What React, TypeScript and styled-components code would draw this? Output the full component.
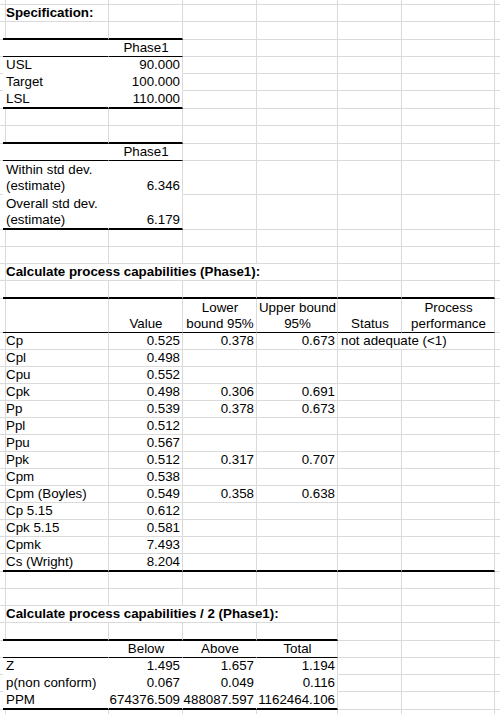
import React from "react";
import styled, { createGlobalStyle } from "styled-components";

const GlobalStyle = createGlobalStyle`
  html, body {
    margin: 0;
    padding: 0;
    background: #ffffff;
    overflow: hidden;
  }
  body {
    font-family: "Liberation Sans", Arial, sans-serif;
    color: #000;
  }
`;

const GRID = "#dadada";

type Align = "left" | "right" | "center";
type Edge = "grid" | "thin" | "thick" | "none";

interface CellSpec {
  col: number;
  text: string;
  span?: number;
  align?: Align;
  bold?: boolean;
}

interface RowSpec {
  h: number;
  cells?: CellSpec[];
  fill?: number; // white filled columns 1..fill (no gridlines)
  thin?: number; // thin black underline for columns 1..thin
  thick?: number; // thick black line for columns 1..thick
}

// helpers to build rows
const title = (text: string, span = 1): CellSpec => ({ col: 1, text, span, bold: true });
const label = (text: string): CellSpec => ({ col: 1, text });
const num = (col: number, text: string): CellSpec => ({ col, text, align: "right" });
const head = (col: number, text: string): CellSpec => ({ col, text, align: "center" });

const values = (name: string, vals: string[]): CellSpec[] => [
  label(name),
  ...vals.map((v, i) => num(i + 2, v)).filter((c) => c.text !== ""),
];

const capRows: [string, string[]][] = [
  ["Cpl", ["0.498"]],
  ["Cpu", ["0.552"]],
  ["Cpk", ["0.498", "0.306", "0.691"]],
  ["Pp", ["0.539", "0.378", "0.673"]],
  ["Ppl", ["0.512"]],
  ["Ppu", ["0.567"]],
  ["Ppk", ["0.512", "0.317", "0.707"]],
  ["Cpm", ["0.538"]],
  ["Cpm (Boyles)", ["0.549", "0.358", "0.638"]],
  ["Cp 5.15", ["0.612"]],
  ["Cpk 5.15", ["0.581"]],
  ["Cpmk", ["7.493"]],
];

const rows: RowSpec[] = [
  { h: 5 },
  { h: 17, cells: [title("Specification:")] },
  { h: 18, thick: 2 },
  { h: 17, fill: 2, thin: 2, cells: [head(2, "Phase1")] },
  { h: 17, fill: 2, cells: values("USL", ["90.000"]) },
  { h: 17, fill: 2, cells: values("Target", ["100.000"]) },
  { h: 18, fill: 2, thick: 2, cells: values("LSL", ["110.000"]) },
  { h: 17 },
  { h: 18, thick: 2 },
  { h: 17, fill: 2, thin: 2, cells: [head(2, "Phase1")] },
  { h: 34, fill: 2, cells: values("Within std dev.\n(estimate)", ["6.346"]) },
  { h: 35, fill: 2, thick: 2, cells: values("Overall std dev.\n(estimate)", ["6.179"]) },
  { h: 17 },
  { h: 17 },
  { h: 17, cells: [title("Calculate process capabilities (Phase1):", 4)] },
  { h: 18, thick: 6 },
  {
    h: 34,
    thin: 6,
    cells: [
      head(2, "Value"),
      head(3, "Lower\nbound 95%"),
      head(4, "Upper bound\n95%"),
      head(5, "Status"),
      head(6, "Process\nperformance"),
    ],
  },
  {
    h: 17,
    cells: [
      ...values("Cp", ["0.525", "0.378", "0.673"]),
      { col: 5, span: 2, text: "not adequate (<1)" },
    ],
  },
  ...capRows.map(([n, v]) => ({ h: 17, cells: values(n, v) })),
  { h: 18, thick: 6, cells: values("Cs (Wright)", ["8.204"]) },
  { h: 17 },
  { h: 17 },
  { h: 17, cells: [title("Calculate process capabilities / 2 (Phase1):", 4)] },
  { h: 18, thick: 4 },
  { h: 17, fill: 4, thin: 4, cells: [head(2, "Below"), head(3, "Above"), head(4, "Total")] },
  { h: 17, fill: 4, cells: values("Z", ["1.495", "1.657", "1.194"]) },
  { h: 17, fill: 4, cells: values("p(non conform)", ["0.067", "0.049", "0.116"]) },
  { h: 18, fill: 4, thick: 4, cells: values("PPM", ["674376.509", "488087.597", "1162464.106"]) },
  { h: 17 },
];

const COLUMN_COUNT = 8;

export default function App() {
  return (
    <>
      <GlobalStyle />
      <Sheet>
        {rows.map((row, i) => (
          <Row key={i} $h={row.h}>
            {renderCells(row)}
          </Row>
        ))}
      </Sheet>
    </>
  );
}

function renderCells(row: RowSpec) {
  const out: React.ReactNode[] = [];
  let col = 0;
  while (col < COLUMN_COUNT) {
    const spec = row.cells?.find((c) => c.col === col);
    const span = spec?.span ?? 1;
    const last = col + span - 1;
    const covers = (n?: number) => n !== undefined && col >= 1 && last <= n;

    let bottom: Edge = "grid";
    if (covers(row.thick)) bottom = "thick";
    else if (covers(row.thin)) bottom = "thin";
    else if (covers(row.fill)) bottom = "none";

    const hideRight = row.fill !== undefined && last < row.fill;

    out.push(
      <Cell
        key={col}
        $span={span}
        $align={spec?.align ?? "left"}
        $bold={!!spec?.bold}
        $bottom={bottom}
        $right={!hideRight}
      >
        {spec?.text}
      </Cell>
    );
    col += span;
  }
  return out;
}

const Sheet = styled.div`
  width: 500px;
  height: 714px;
  overflow: hidden;
  background: #ffffff;
`;

const Row = styled.div<{ $h: number }>`
  display: grid;
  grid-template-columns: 3px 106px 74px 74px 81px 64px 93px 1fr;
  height: ${(p) => p.$h}px;
`;

const bottomBorder = (e: Edge) => {
  switch (e) {
    case "thick":
      return "2px solid #000";
    case "thin":
      return "1px solid #000";
    case "none":
      return "1px solid #fff";
    default:
      return `1px solid ${GRID}`;
  }
};

const Cell = styled.div<{
  $span: number;
  $align: Align;
  $bold: boolean;
  $bottom: Edge;
  $right: boolean;
}>`
  grid-column: span ${(p) => p.$span};
  box-sizing: border-box;
  display: flex;
  align-items: flex-end;
  justify-content: ${(p) =>
    p.$align === "right" ? "flex-end" : p.$align === "center" ? "center" : "flex-start"};
  text-align: ${(p) => p.$align};
  padding: 0 2px 0 3px;
  min-width: 0;
  font-size: 13.33px;
  line-height: 16px;
  font-weight: ${(p) => (p.$bold ? 700 : 400)};
  white-space: pre;
  color: #000;
  border-right: 1px solid ${(p) => (p.$right ? GRID : "#fff")};
  border-bottom: ${(p) => bottomBorder(p.$bottom)};
`;
